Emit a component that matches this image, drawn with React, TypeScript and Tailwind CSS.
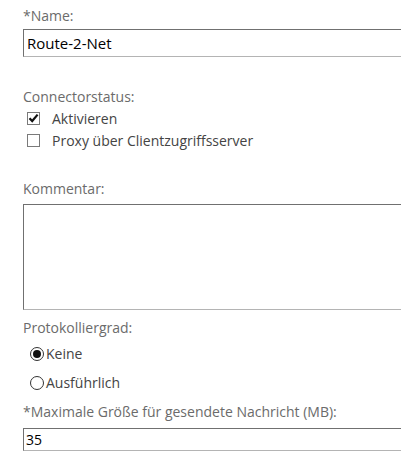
import { useState } from "react";

const labelClass = "text-[14px] leading-[20px] text-[#6b6b6b]";
const boxBorder =
  "border border-t-[#707070] border-l-[#707070] border-b-[#b4b4b4] border-r-[#b4b4b4] bg-white";

function CheckRow({ checked, label }: { checked: boolean; label: string }) {
  return (
    <div className="flex h-[22px] items-center">
      <span className="flex h-[13px] w-[13px] items-center justify-center border border-[#7a7a7a] bg-white">
        {checked ? (
          <svg width="11" height="10" viewBox="0 0 11 10">
            <path
              d="M1.5 5.2 L4.2 8 L9.6 1.6"
              fill="none"
              stroke="#111"
              strokeWidth="2.2"
            />
          </svg>
        ) : null}
      </span>
      <span className="ml-[12px] text-[14px] text-[#444]">{label}</span>
    </div>
  );
}

function RadioRow({ checked, label }: { checked: boolean; label: string }) {
  return (
    <div className="flex h-[29px] items-center">
      <span className="flex h-[14px] w-[14px] items-center justify-center rounded-full border border-[#333] bg-white">
        {checked ? (
          <span className="h-[8px] w-[8px] rounded-full bg-[#111]" />
        ) : null}
      </span>
      <span className="ml-[2px] text-[14px] text-[#444]">{label}</span>
    </div>
  );
}

export default function App() {
  const [name, setName] = useState("Route-2-Net");
  const [size, setSize] = useState("35");

  return (
    <div
      className="h-[467px] w-[401px] overflow-hidden bg-white pl-[23px] pt-[6px]"
      style={{ fontFamily: '"Open Sans", "Noto Sans", sans-serif' }}
    >
      <div className={labelClass}>*Name:</div>
      <input
        className={`mt-[3px] block h-[28px] w-[400px] px-[3px] text-[15px] text-black outline-none ${boxBorder}`}
        value={name}
        onChange={(e) => setName(e.target.value)}
      />

      <div className={`mt-[30px] ${labelClass}`}>Connectorstatus:</div>
      <div className="pl-[4px]">
        <CheckRow checked label="Aktivieren" />
        <CheckRow checked={false} label="Proxy über Clientzugriffsserver" />
      </div>

      <div className={`mt-[28px] ${labelClass}`}>Kommentar:</div>
      <textarea
        className={`mt-[5px] block h-[106px] w-[400px] resize-none outline-none ${boxBorder}`}
      />

      <div className={`mt-[8px] ${labelClass}`}>Protokolliergrad:</div>
      <div className="mt-[1px] pl-[7px]">
        <RadioRow checked label="Keine" />
        <RadioRow checked={false} label="Ausführlich" />
      </div>

      <div className={`mt-[5px] ${labelClass}`}>
        *Maximale Größe für gesendete Nachricht (MB):
      </div>
      <input
        className={`mt-[6px] block h-[23px] w-[400px] px-[2px] text-[14px] text-black outline-none ${boxBorder}`}
        value={size}
        onChange={(e) => setSize(e.target.value)}
      />
    </div>
  );
}
